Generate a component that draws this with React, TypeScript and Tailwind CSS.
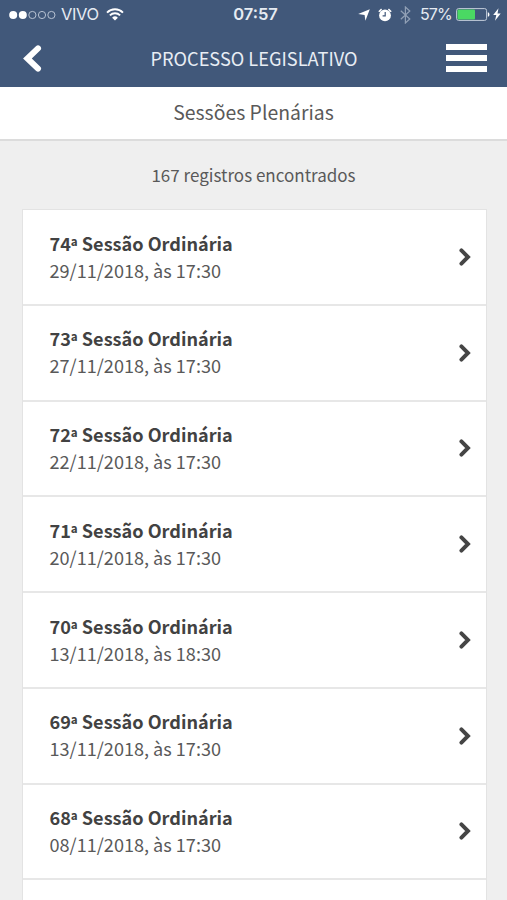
import React from 'react';

interface Session {
  number: number;
  date: string;
  time: string;
}

const sessions: Session[] = [
  { number: 74, date: '29/11/2018', time: '17:30' },
  { number: 73, date: '27/11/2018', time: '17:30' },
  { number: 72, date: '22/11/2018', time: '17:30' },
  { number: 71, date: '20/11/2018', time: '17:30' },
  { number: 70, date: '13/11/2018', time: '18:30' },
  { number: 69, date: '13/11/2018', time: '17:30' },
  { number: 68, date: '08/11/2018', time: '17:30' },
];

// Signal dots, two of them filled
const SignalDots: React.FC = () => (
  <svg width="47" height="10" viewBox="0 0 47 10" className="block">
    <circle cx="4.2" cy="5" r="4" fill="#fff" />
    <circle cx="13.8" cy="5" r="4" fill="#fff" />
    {[23.4, 33, 42.4].map((cx) => (
      <circle key={cx} cx={cx} cy="5" r="3.6" fill="none" stroke="#c3cddb" strokeWidth="0.9" />
    ))}
  </svg>
);

const WifiIcon: React.FC = () => (
  <svg width="18" height="13" viewBox="0 0 18 13" fill="none" stroke="#fff" strokeWidth="1.9" className="block">
    <path d="M1 4.6a11.4 11.4 0 0 1 16 0" />
    <path d="M3.9 7.4a7.3 7.3 0 0 1 10.2 0" />
    <path d="M9 12.6 6.1 9.7a4.2 4.2 0 0 1 5.8 0z" fill="#fff" stroke="none" />
  </svg>
);

const StatusBar: React.FC = () => (
  <div className="grid h-[29px] grid-cols-[1fr_auto_1fr] items-center font-['Inter','Liberation_Sans',sans-serif] text-[#e6ebf2]">
    <div className="flex items-center pl-[9px]">
      <SignalDots />
      <span className="ml-[5px] text-[16.5px] tracking-[-0.4px]">VIVO</span>
      <span className="ml-[7px]">
        <WifiIcon />
      </span>
    </div>
    <span className="ml-1 text-[16.5px] font-semibold">07:57</span>
    <div className="flex items-center justify-end pr-[6px]">
      <svg width="12" height="12" viewBox="0 0 12 12" className="mr-2 block">
        <path d="M11.8.2 7.4 11.8 6.6 5.9.2 5z" fill="#fff" />
      </svg>
      <svg width="14" height="14" viewBox="0 0 14 14" className="mr-2 block" fill="none">
        <circle cx="7" cy="7.4" r="5.9" fill="#fff" />
        <path d="M.8 3.7 3.6 1.1M13.2 3.7l-2.8-2.6" stroke="#fff" strokeWidth="1.5" />
        <path d="M7.2 4v3.8H4.6" stroke="#41587a" strokeWidth="1.2" />
      </svg>
      <svg width="11" height="18" viewBox="0 0 11 18" className="mr-[9px] block" fill="none" stroke="#91a0b6" strokeWidth="1.2">
        <path d="M.8 4.8 9.8 13 5.4 17V1l4.4 4L.8 13.2" />
      </svg>
      <span className="mr-1 mb-px text-[16px] tracking-[-0.8px]">57%</span>
      <svg width="34" height="13" viewBox="0 0 34 13" className="mr-[3px] block">
        <rect x=".6" y=".6" width="30" height="11.8" rx="2" fill="none" stroke="#c3cddb" />
        <rect x="1.5" y="1.5" width="17.5" height="10" rx="1" fill="#4ad963" />
        <path d="M31.8 4.2c2.2.6 2.2 4 0 4.6z" fill="#fff" />
      </svg>
      <svg width="8" height="13" viewBox="0 0 8 13" className="block">
        <path d="M5.5.3.2 7.1h3.1L2 12.7l5.7-7.2H4.5z" fill="#fff" />
      </svg>
    </div>
  </div>
);

const Header: React.FC = () => (
  <header className="h-[87px] bg-[#41587a]">
    <StatusBar />
    <div className="grid h-[58px] grid-cols-[1fr_auto_1fr] items-center pr-5 pl-[23px]">
      <button aria-label="Voltar">
        <svg width="19" height="29" viewBox="0 0 19 29" className="block" fill="none">
          <path d="M15 4.4 4.4 14.5 15 24.6" stroke="#fff" strokeWidth="6" strokeLinecap="round" />
        </svg>
      </button>
      <h1 className="pt-px pr-0.5 text-[18.2px] text-[#e8edf4]">PROCESSO LEGISLATIVO</h1>
      <button aria-label="Menu" className="mb-px flex flex-col gap-[5px] justify-self-end">
        <span className="block h-1.5 w-[41px] bg-white" />
        <span className="block h-1.5 w-[41px] bg-white" />
        <span className="block h-1.5 w-[41px] bg-white" />
      </button>
    </div>
  </header>
);

const SessionRow: React.FC<{ session: Session }> = ({ session }) => (
  <li className="flex h-[95.75px] shrink-0 items-center justify-between border-b-2 border-[#e7e7e7] pr-[15px] pl-[26.5px]">
    <div className="pb-[0.5px] text-[18.1px] leading-[27px] text-[#595959]">
      <p className="font-bold text-[#424242]">
        {session.number}
        <span className="align-[-1.5px] text-[17px] leading-none">ª</span> Sessão Ordinária
      </p>
      <p>
        {session.date}, às {session.time}
      </p>
    </div>
    <svg width="12" height="18" viewBox="0 0 12 18" className="block" fill="none">
      <path d="M2.4 2.4 9 9l-6.6 6.6" stroke="#454545" strokeWidth="3.9" strokeLinecap="round" />
    </svg>
  </li>
);

const App: React.FC = () => {
  return (
    <div className="flex h-[900px] w-[507px] flex-col overflow-hidden bg-[#efefef] font-['Noto_Sans_CJK_SC',sans-serif] text-[#595959]">
      <Header />
      <div className="flex h-[54px] items-center justify-center border-b-2 border-[#dcdcdc] bg-white pb-0.5">
        <h2 className="text-[19.4px]">Sessões Plenárias</h2>
      </div>
      <main className="flex min-h-0 flex-1 flex-col pr-5 pl-[22px]">
        <p className="flex h-[68px] shrink-0 items-center justify-center pr-0.5 text-[17px]">
          167 registros encontrados
        </p>
        <ul className="flex min-h-0 flex-1 flex-col border border-b-0 border-[#e3e3e3] bg-white">
          {sessions.map((session) => (
            <SessionRow key={session.number} session={session} />
          ))}
        </ul>
      </main>
    </div>
  );
};

export default App;
